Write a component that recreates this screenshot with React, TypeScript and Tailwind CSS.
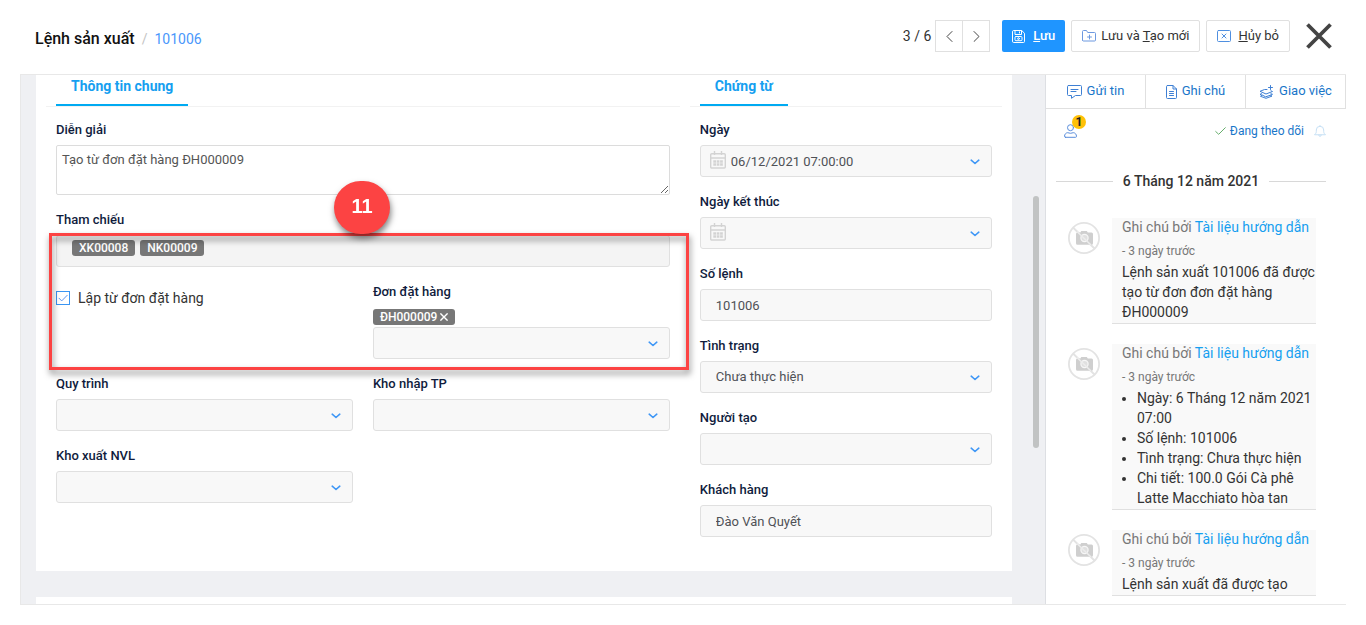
import React, { useState } from 'react';

interface FieldProps {
  id: string;
  label: string;
  children: React.ReactNode;
}

interface Note {
  id: number;
  author: string;
  time: string;
  text?: string;
  items?: string[];
}

const NOTES: Note[] = [
  { id: 1, author: 'Tài liệu hướng dẫn', time: '3 ngày trước', text: 'Lệnh sản xuất 101006 đã được tạo từ đơn đơn đặt hàng ĐH000009' },
  {
    id: 2,
    author: 'Tài liệu hướng dẫn',
    time: '3 ngày trước',
    items: [
      'Ngày: 6 Tháng 12 năm 2021 07:00',
      'Số lệnh: 101006',
      'Tình trạng: Chưa thực hiện',
      'Chi tiết: 100.0 Gói Cà phê Latte Macchiato hòa tan',
    ],
  },
  { id: 3, author: 'Tài liệu hướng dẫn', time: '3 ngày trước', text: 'Lệnh sản xuất đã được tạo' },
];

const inputClass = 'block h-8 w-full appearance-none rounded-[3px] border border-[#e0e0e0] bg-[#f8f8f8] px-[15px] text-[13px] text-[#4f5156] outline-none';

const icon = { fill: 'none', stroke: 'currentColor', strokeLinecap: 'round', strokeLinejoin: 'round' } as const;

function SaveIcon() {
  return (
    <svg {...icon} className="h-[13px] w-[13px]" viewBox="0 0 13 13" aria-hidden="true">
      <path d="M.5 1.5a1 1 0 0 1 1-1h8.200l2.800 2.800v8.200a1 1 0 0 1-1 1h-10a1 1 0 0 1-1-1z" />
      <path d="M3 .8v3.700h6.500V.8M7.500 1.800V3" />
      <rect x="3" y="6.5" width="7" height="4.2" rx="1" />
      <circle cx="6.5" cy="8.6" r=".9" />
    </svg>
  );
}

function FolderPlusIcon() {
  return (
    <svg {...icon} className="h-3 w-[14px] text-[#6d99e0]" viewBox="0 0 14 12" aria-hidden="true">
      <path d="M.5 10V1.500a1 1 0 0 1 1-1h3l1.200 2h6.800a1 1 0 0 1 1 1V10a1 1 0 0 1-1 1h-11a1 1 0 0 1-1-1z" />
      <path d="M7.500 5v4M5.500 7h4" />
    </svg>
  );
}

function CancelIcon() {
  return (
    <svg {...icon} className="h-3 w-[14px] text-[#4f8fe0]" viewBox="0 0 14 12" aria-hidden="true">
      <rect x=".5" y=".5" width="13" height="11" rx="1" />
      <path d="M5 4l4 4M9 4l-4 4" />
    </svg>
  );
}

function ChatIcon() {
  return (
    <svg {...icon} className="h-[14px] w-[15px] text-[#3f80d4]" viewBox="0 0 15 14" aria-hidden="true">
      <path d="M1.500.5h12a1 1 0 0 1 1 1v8a1 1 0 0 1-1 1H8.500L4.500 13.300v-2.800h-3a1 1 0 0 1-1-1v-8a1 1 0 0 1 1-1z" />
      <path d="M4 4.500h7M4 6.500h5" />
    </svg>
  );
}

function NoteIcon() {
  return (
    <svg {...icon} className="h-[14px] w-[11px] text-[#3f80d4]" viewBox="0 0 11 14" aria-hidden="true">
      <path d="M1.500.5h5.500l3.500 3.500v8.500a1 1 0 0 1-1 1h-8a1 1 0 0 1-1-1v-11a1 1 0 0 1 1-1z" />
      <path d="M7 .5V4h3.500M3.500 6.500h4M3.500 8.500h4M3.500 10.500h4" />
    </svg>
  );
}

function LayersIcon() {
  return (
    <svg {...icon} className="h-[14px] w-[15px] text-[#3f80d4]" viewBox="0 0 15 14" aria-hidden="true">
      <path d="M8 4.500H5.500L1 6.300l6 2.700 6.500-2.500-1.500-.7M2.500 8.700 1 9.300l2 1M12 8.700l1.500.6-2 .9M3 10.300l-1.500 1L7 13.300l6-2.200-1.500-.9L7 11.700z" />
      <path d="M11.500.5v4M9.500 2.500h4" />
    </svg>
  );
}

function UserIcon() {
  return (
    <svg {...icon} className="h-[14px] w-[13px] text-[#5b8edb]" viewBox="0 0 13 14" aria-hidden="true">
      <circle cx="6.5" cy="3.7" r="3" />
      <path d="M1.500 13.300h10a1 1 0 0 0 1-1c0-2-1.500-3.600-3.200-3.600q-2.800 1.200-5.600 0C2 8.700.5 10.300.5 12.300a1 1 0 0 0 1 1z" />
    </svg>
  );
}

function BellIcon() {
  return (
    <svg {...icon} className="h-3 w-3 text-[#c6e0f5]" viewBox="0 0 12 12" aria-hidden="true">
      <path d="M6 .5v1M.8 9.500C2.500 8 2.300 7.200 2.300 5a3.700 3.700 0 0 1 7.400 0c0 2.200-.2 3 1.500 4.500zM4.800 10.200a1.200 1.200 0 0 0 2.400 0" />
    </svg>
  );
}

function CalendarIcon() {
  return (
    <svg className="absolute top-[6px] left-[10px] h-[18px] w-4 text-[#d3d3d3]" viewBox="0 0 16 18" fill="none" stroke="currentColor" aria-hidden="true">
      <rect x=".7" y="2.7" width="14.6" height="14.3" rx="1" strokeWidth="1.4" />
      <path d="M4.500 0v4M11.500 0v4M1 7h14" strokeWidth="1.4" />
      <path d="M3.300 10.500h2.700M6.700 10.500h2.700M10.100 10.500h2.700M3.300 13.500h2.700M6.700 13.500h2.700M10.100 13.500h2.700" strokeWidth="2.4" />
    </svg>
  );
}

function NoPhoto() {
  return (
    <svg className="mt-1 h-8 w-8 shrink-0" viewBox="0 0 32 32" fill="none" aria-hidden="true">
      <path d="M5 5.500 27 27" stroke="#e3e3e3" strokeWidth="1.8" />
      <path d="M9.300 10.500h3l1-1.500h5.500l1 1.500h3.700a1.500 1.500 0 0 1 1.500 1.500v9.200a1.500 1.500 0 0 1-1.500 1.500h-14A1.500 1.500 0 0 1 8 21.200V12a1.500 1.500 0 0 1 1.300-1.500z" fill="#cfcfcf" />
      <circle cx="16.5" cy="16" r="3.6" fill="#e0e0e0" stroke="#f7f7f7" strokeWidth="1.2" />
      <path d="M9 9.500 23 23" stroke="#ececec" strokeWidth="1.600" />
      <circle cx="16" cy="16" r="15.1" stroke="#e3e3e3" strokeWidth="1.8" />
    </svg>
  );
}

function Chevron() {
  return (
    <svg {...icon} className="pointer-events-none absolute top-[14px] right-3 h-[6px] w-[10px] text-[#3f97f6]" viewBox="0 0 10 6" strokeWidth="1.6" aria-hidden="true">
      <path d="M1.200 1.200 5 4.500l3.800-3.300" />
    </svg>
  );
}

function Field({ id, label, children }: FieldProps) {
  return (
    <div>
      <label htmlFor={id} className="mb-[5px] block text-[13px] leading-5 font-medium text-[#101c3d]">{label}</label>
      {children}
    </div>
  );
}

function SelectBox({ id, value = '' }: { id: string; value?: string }) {
  return (
    <div className="relative">
      <select id={id} className={inputClass} defaultValue={value}>
        <option value={value}>{value}</option>
      </select>
      <Chevron />
    </div>
  );
}

function DateBox({ id, value = '' }: { id: string; value?: string }) {
  return (
    <div className="relative">
      <input id={id} type="text" defaultValue={value} className="block h-8 w-full rounded-[3px] border border-[#e0e0e0] bg-[#f8f8f8] pr-8 pl-[30px] text-[13px] text-[#4f5156] outline-none" />
      <CalendarIcon />
      <Chevron />
    </div>
  );
}

function Tag({ children }: { children: React.ReactNode }) {
  return <span className="inline-flex h-4 items-center rounded-[3px] bg-[#777777] px-[7px] text-xs font-medium text-white">{children}</span>;
}

function SectionTitle({ children }: { children: React.ReactNode }) {
  return (
    <div className="flex h-8 border-b border-[#f2f2f2] px-[10px]">
      <h2 className="flex h-[31px] items-center border-b-2 border-[#00aaf2] px-[15px] pb-2 text-sm font-bold text-[#169ff0]">{children}</h2>
    </div>
  );
}

export default function App() {
  const [fromOrder, setFromOrder] = useState(true);

  return (
    <div className="flex h-screen flex-col bg-white px-5 pb-5 font-[Roboto,'Noto_Sans',sans-serif] text-sm text-[#333333]">
      <header className="flex h-[74px] shrink-0 items-start justify-between pt-5">
        <div className="flex items-baseline pt-[7px] pl-[15px]">
          <h1 className="text-base font-medium text-[#111111]">Lệnh sản xuất</h1>
          <span className="mx-[7px] text-[#c4c4c4]">/</span>
          <a href="#101006" className="text-[#4a97fb]">101006</a>
        </div>
        <div className="flex items-center pr-[14px]">
          <span className="mr-1">3 / 6</span>
          <div className="mr-3 flex h-8 w-[55px] border border-[#e0e0e0] text-[#444444]">
            <button type="button" aria-label="Trước" className="flex flex-1 items-center justify-center border-r border-[#e0e0e0]">
              <svg {...icon} className="h-[11px] w-[7px]" viewBox="0 0 7 11"><path d="M6 .5 1 5.500l5 5" /></svg>
            </button>
            <button type="button" aria-label="Sau" className="flex flex-1 items-center justify-center">
              <svg {...icon} className="h-[11px] w-[7px]" viewBox="0 0 7 11"><path d="m1 .5 5 5-5 5" /></svg>
            </button>
          </div>
          <div className="flex gap-[6px] text-[13px]">
            <button type="button" className="flex h-8 items-center gap-2 rounded-[2px] bg-[#1f95ff] px-[10px] font-medium text-white">
              <SaveIcon />
              <span><u>L</u>ưu</span>
            </button>
            <button type="button" className="flex h-8 items-center gap-[5px] rounded-[2px] border border-[#e0e0e0] px-[10px]">
              <FolderPlusIcon />
              <span>Lưu và <u>T</u>ạo mới</span>
            </button>
            <button type="button" className="flex h-8 items-center gap-[7px] rounded-[2px] border border-[#e0e0e0] px-[10px]">
              <CancelIcon />
              <span><u>H</u>ủy bỏ</span>
            </button>
          </div>
          <button type="button" aria-label="Đóng" className="ml-4">
            <svg className="h-[26px] w-[26px] text-[#444444]" viewBox="0 0 26 26" fill="none" stroke="currentColor" strokeWidth="3.8">
              <path d="m1.500 1.500 23 23M24.500 1.500l-23 23" />
            </svg>
          </button>
        </div>
      </header>

      <div className="flex min-h-0 flex-1 border-y border-l border-[#e8e8e8]">
        <main className="relative min-w-0 flex-1 overflow-hidden bg-[#eff0f3] pr-[33px] pl-[15px]">
          <form className="grid grid-cols-[67fr_33fr] gap-[10px] bg-white px-[10px] pb-[34px]">
            <section>
              <SectionTitle>Thông tin chung</SectionTitle>
              <div className="relative flex flex-col gap-[15px] px-[10px] pt-[13px]">
                <Field id="description" label="Diễn giải">
                  <textarea id="description" defaultValue="Tạo từ đơn đặt hàng ĐH000009" className="block h-[50px] w-full rounded-[2px] border border-[#dcdcdc] px-[5px] py-1 text-[13px] leading-5 text-[#555555] outline-none" />
                </Field>
                <div>
                  <div className="mb-[5px] text-[13px] leading-5 font-medium text-[#101c3d]">Tham chiếu</div>
                  <div className="flex h-8 items-start gap-[5px] rounded-[3px] border border-[#e0e0e0] bg-[#f4f4f4] px-[15px] pt-1">
                    <Tag>XK00008</Tag>
                    <Tag>NK00009</Tag>
                  </div>
                </div>
                <div className="grid grid-cols-2 gap-x-5 gap-y-[15px]">
                  <label className="flex items-center gap-2 self-start pt-[6px] leading-5">
                    <span className="relative flex h-[14px] w-[14px]">
                      <input type="checkbox" checked={fromOrder} onChange={(e) => setFromOrder(e.target.checked)} className="peer h-[14px] w-[14px] appearance-none border border-[#3b95f2]" />
                      <svg {...icon} className="pointer-events-none absolute inset-0 hidden text-[#5b93f0] peer-checked:block" viewBox="0 0 14 14"><path d="m3 7.200 2.700 2.700L11.200 4.300" /></svg>
                    </span>
                    Lập từ đơn đặt hàng
                  </label>
                  <Field id="order" label="Đơn đặt hàng">
                    <div className="flex h-5 items-center">
                      <Tag>
                        ĐH000009
                        <button type="button" aria-label="Xóa" className="ml-[3px]">
                          <svg className="h-2 w-2" viewBox="0 0 8 8" fill="none" stroke="currentColor" strokeWidth="1.4"><path d="m.4.4 7.200 7.200M7.600.4.4 7.600" /></svg>
                        </button>
                      </Tag>
                    </div>
                    <SelectBox id="order" />
                  </Field>
                  <Field id="process" label="Quy trình"><SelectBox id="process" /></Field>
                  <Field id="stock-in" label="Kho nhập TP"><SelectBox id="stock-in" /></Field>
                  <Field id="stock-out" label="Kho xuất NVL"><SelectBox id="stock-out" /></Field>
                </div>

                {/* Step highlight */}
                <div className="pointer-events-none absolute top-[126px] right-[-9px] left-[3px] h-[137px] border-3 border-[#fc4343] drop-shadow-[1px_4px_3px_rgba(0,0,0,0.5)]" />
                <div className="pointer-events-none absolute top-[74px] left-[288px] flex h-[53px] w-14 items-center justify-center rounded-full bg-[#fc4343] pb-1 font-['Liberation_Sans',sans-serif] text-xl font-bold text-white drop-shadow-[1px_4px_3px_rgba(0,0,0,0.5)]">11</div>
              </div>
            </section>

            <section>
              <SectionTitle>Chứng từ</SectionTitle>
              <div className="flex flex-col gap-[15px] px-[10px] pt-[13px]">
                <Field id="date" label="Ngày"><DateBox id="date" value="06/12/2021 07:00:00" /></Field>
                <Field id="end-date" label="Ngày kết thúc"><DateBox id="end-date" /></Field>
                <Field id="number" label="Số lệnh"><input id="number" type="text" defaultValue="101006" className={inputClass} /></Field>
                <Field id="status" label="Tình trạng"><SelectBox id="status" value="Chưa thực hiện" /></Field>
                <Field id="creator" label="Người tạo"><SelectBox id="creator" /></Field>
                <Field id="customer" label="Khách hàng"><input id="customer" type="text" defaultValue="Đào Văn Quyết" className={inputClass} /></Field>
              </div>
            </section>
          </form>
          <div className="mt-[26px] h-40 bg-white" />
          <div className="absolute top-[121px] right-[6px] h-[252px] w-[6px] rounded-full bg-[#c1c3c3]" />
        </main>

        <aside className="w-[301px] shrink-0 overflow-hidden border-l border-[#dddfe3]">
          <div className="grid h-[34px] grid-cols-3 border-b border-[#e0e0e0] text-[13px] text-[#1976c9]">
            <button type="button" className="flex items-center justify-center gap-[5px] border-r border-[#e0e0e0]"><ChatIcon />Gửi tin</button>
            <button type="button" className="flex items-center justify-center gap-[5px] border-r border-[#e0e0e0]"><NoteIcon />Ghi chú</button>
            <button type="button" className="flex items-center justify-center gap-[5px] border-r border-[#e0e0e0]"><LayersIcon />Giao việc</button>
          </div>

          <div className="flex h-11 items-center justify-between pr-5 pl-[18px]">
            <button type="button" aria-label="Người theo dõi" className="relative">
              <UserIcon />
              <span className="absolute -top-[9px] left-2 flex h-[14px] w-[14px] items-center justify-center rounded-full bg-[#ffc107] text-xs font-bold text-[#222222]">1</span>
            </button>
            <div className="flex items-center text-xs text-[#1976c9]">
              <svg {...icon} className="mr-1 h-2 w-[11px] text-[#66ad6c]" viewBox="0 0 11 8"><path d="m.7 4.500 3 2.800L10.300.7" /></svg>
              <a href="#follow">Đang theo dõi</a>
              <span className="ml-[10px]"><BellIcon /></span>
            </div>
          </div>

          <div className="mt-[18px] flex items-center gap-[10px] pr-5 pl-[10px] leading-5 font-medium">
            <span className="h-px flex-1 bg-[#d8d8d8]" />
            6 Tháng 12 năm 2021
            <span className="h-px flex-1 bg-[#d8d8d8]" />
          </div>

          <div className="mt-[27px] flex flex-col gap-5 pr-[30px] pl-[22px]">
            {NOTES.map((note) => (
              <article key={note.id} className="flex gap-3">
                <NoPhoto />
                <div className="min-w-0 flex-1 border-b border-[#e0e0e0] bg-[#f9f9f9] pb-px pl-[10px] leading-5">
                  <p className="leading-[18px] text-[#777777]">Ghi chú bởi <a href="#author" className="text-[#169ff0]">{note.author}</a></p>
                  <p className="mt-[5px] mb-px text-xs leading-5 text-[#777777]">- {note.time}</p>
                  {note.text && <p>{note.text}</p>}
                  {note.items && (
                    <ul className="list-disc pl-[15px]">
                      {note.items.map((item) => <li key={item}>{item}</li>)}
                    </ul>
                  )}
                </div>
              </article>
            ))}
          </div>
        </aside>
      </div>
    </div>
  );
}
